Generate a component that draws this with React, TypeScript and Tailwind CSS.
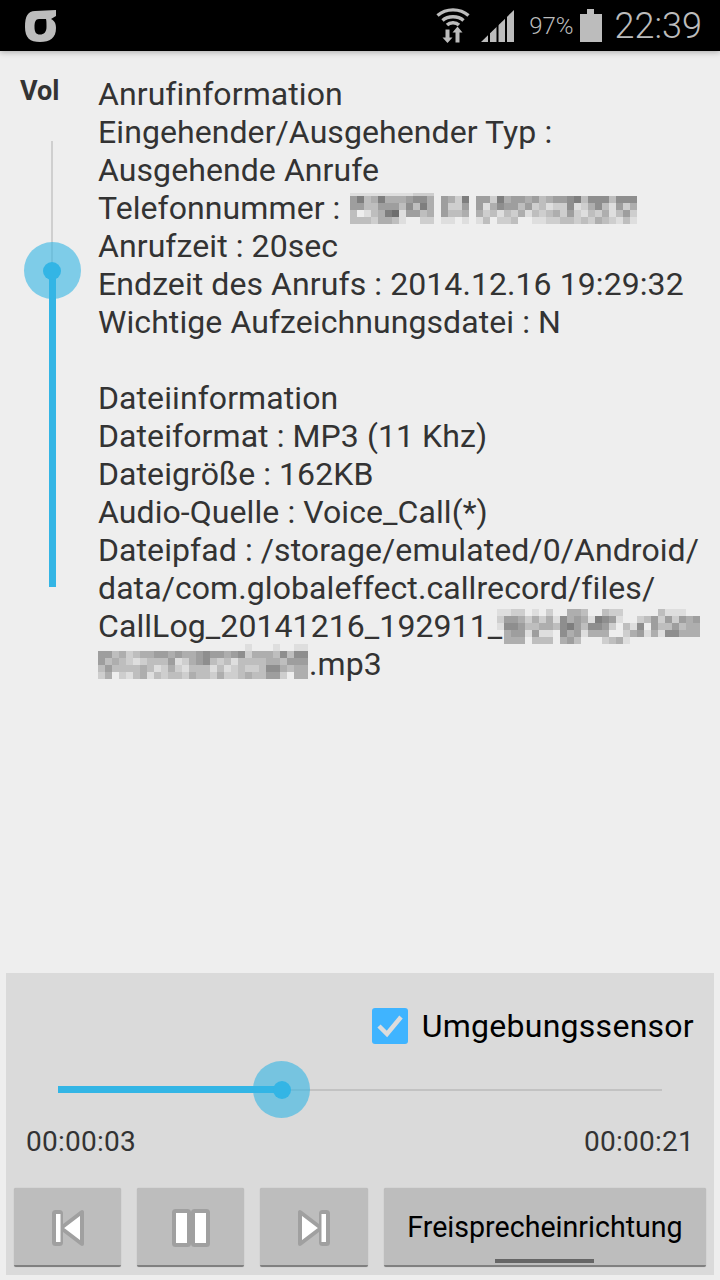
const levels = (rows: string[]) => rows.map((r) => r.split("").map((c) => (c === " " ? 0 : Number(c))));

// pixelated (censored) bits of the text
const phoneBlur = [
  "111111111222",
  "573474445664 5427 55274554534556736663666",
  "553355536374 5225 51465535231226124631524",
  "301347815534 5334 42313241323425213241352",
  "333244310022 1101 13022300112233232432131",
];
const fileBlurA = [
  "11220102 0443 0322 0 0 3111 0 3113 1".replace(/ /g, "0").slice(0, 29),
  "25542424164541765100235252545",
  "16653344367536652031605335344",
  "04551511064514440024514166444",
  "04440333045300023410000000000",
];
const fileBlurB = [
  "000000000000000000000100010011",
  "553423445545445655456244436366",
  "534321233351245632313333443555",
  "353333431242133313123223664344",
  "240213413233243324223433552044",
];

const Blur = ({ rows, top = 0, className }: { rows: string[]; top?: number; className?: string }) => {
  const cell = 7;
  const data = levels(rows);
  const w = Math.max(...rows.map((r) => r.length)) * cell;
  return (
    <svg width={w} height={rows.length * cell - top} className={className} shapeRendering="crispEdges">
      {data.map((row, y) =>
        row.map((v, x) =>
          v ? <rect key={x + "-" + y} x={x * cell} y={y * cell - top} width={cell} height={cell} fill={`rgb(${238 - v * 16},${238 - v * 16},${238 - v * 16})`} /> : null
        )
      )}
    </svg>
  );
};

const StatusBar = () => (
  <div className="relative z-10 flex h-[51px] items-center bg-black text-[#bcbcbc] shadow-[0_1px_6px_rgba(0,0,0,0.3)]">
    <svg width="31" height="32" viewBox="25 9 31 32" className="ml-[25px]">
      <path
        fillRule="evenodd"
        d="M35 10L56 9V15L51 18C55 20 56 23 56 27C56 37 50 41 40 41C30 41 25 37 25 26C25 15 28 10 35 10ZM46 18H39C35.5 18 34.5 21 34.5 26C34.5 31 36 33.5 40 33.5C44 33.5 46.5 31 46.5 26C46.5 22 46.5 20 46 18Z"
        fill="#bcbcbc"
      />
    </svg>
    <div className="ml-auto flex items-center">
      <svg width="34" height="36" viewBox="0 0 34 36" className="mt-[-1px]">
        <g fill="none" stroke="#bcbcbc" strokeWidth="3.4">
          <path d="M1.5 8.5C10 1 24 1 32.5 8.5" />
          <path d="M6.5 13.5C12 8.5 22 8.5 27.5 13.5" />
          <path d="M11 18C14 15 20 15 23 18" />
        </g>
        <path d="M9.5 22.5h4v8h3L11.5 36l-5-5.5h3zM19.5 29.5v-4h-3l5-6 5 6h-3v10h-4z" fill="#bcbcbc" />
      </svg>
      <svg width="34" height="34" viewBox="0 0 34 34" className="ml-[11px] mt-[2px]">
        <path d="M0 32L33 0V32Z" fill="#bcbcbc" />
        <g fill="#000">
          <rect x="7" y="0" width="2" height="32" />
          <rect x="15.5" y="0" width="2" height="32" />
          <rect x="24" y="0" width="2" height="32" />
        </g>
      </svg>
      <span className="ml-[14px] text-[24px] font-light leading-none">97%</span>
      <svg width="24" height="33" viewBox="0 0 24 33" className="ml-[5px]">
        <path d="M8 0h7v5h8v28H1V5h7z" fill="#bcbcbc" />
      </svg>
      <span className="ml-[12px] mr-[18px] text-[36px] font-light leading-none">22:39</span>
    </div>
  </div>
);

const Thumb = ({ className }: { className: string }) => (
  <div className={`absolute flex h-[57px] w-[57px] items-center justify-center rounded-full bg-[#33b5e5]/60 ${className}`}>
    <div className="h-[18px] w-[18px] rounded-full bg-[#33b5e5]" />
  </div>
);

const VolumeSlider = () => (
  <div className="flex w-[99px] shrink-0 flex-col pt-[25px]">
    <div className="ml-[20px] text-[27px] font-bold leading-[30px] text-[#333]">Vol</div>
    <div className="relative ml-[23px] mt-[35px] flex w-[58px] flex-col items-center">
      <div className="h-[130px] w-[2px] bg-[#cfcfcf]" />
      <div className="h-[316px] w-[7px] bg-[#33b5e5]" />
      <Thumb className="left-[0.5px] top-[101px]" />
    </div>
  </div>
);

const Line = ({ children }: { children?: React.ReactNode }) => (
  <div className="flex h-[38px] items-start whitespace-pre">{children}</div>
);

const InfoText = () => (
  <div className="ml-[-1px] flex-1 pt-[24px] text-[32px] leading-[38px] tracking-[0.08px] text-[#333]">
    <Line>Anrufinformation</Line>
    <Line>Eingehender/Ausgehender Typ :</Line>
    <Line>Ausgehende Anrufe</Line>
    <Line>
      Telefonnummer : <Blur rows={phoneBlur} top={4} className="ml-[2px] mt-[4px] shrink-0" />
    </Line>
    <Line>Anrufzeit : 20sec</Line>
    <Line>Endzeit des Anrufs : 2014.12.16 19:29:32</Line>
    <Line>Wichtige Aufzeichnungsdatei : N</Line>
    <Line />
    <Line>Dateiinformation</Line>
    <Line>Dateiformat : MP3 (11 Khz)</Line>
    <Line>Dateigröße : 162KB</Line>
    <Line>Audio-Quelle : Voice_Call(*)</Line>
    <Line>Dateipfad : /storage/emulated/0/Android/</Line>
    <Line>data/com.globaleffect.callrecord/files/</Line>
    <Line>
      CallLog_20141216_192911_
      <Blur rows={fileBlurA} className="ml-[-5px] mt-[2px] shrink-0" />
    </Line>
    <Line>
      <Blur rows={fileBlurB} className="mt-[-1px] shrink-0" />
      <span className="ml-[1px]">.mp3</span>
    </Line>
  </div>
);

const PrevIcon = () => (
  <svg width="34" height="38" viewBox="0 0 34 38">
    <g fill="#fff" stroke="#a0a0a0" strokeWidth="4" strokeLinejoin="round">
      <rect x="3" y="3" width="7" height="32" rx="1.5" />
      <path d="M31 3V35L10 19Z" />
    </g>
    <rect x="5.5" y="5" width="4" height="28" fill="#fff" />
  </svg>
);

const PauseIcon = () => (
  <svg width="38" height="38" viewBox="0 0 38 38">
    <g fill="#fff" stroke="#a0a0a0" strokeWidth="4" strokeLinejoin="round">
      <rect x="2" y="2" width="15" height="34" rx="1.5" />
      <rect x="21" y="2" width="15" height="34" rx="1.5" />
    </g>
  </svg>
);

const NextIcon = () => (
  <svg width="34" height="38" viewBox="0 0 34 38">
    <g fill="#fff" stroke="#a0a0a0" strokeWidth="4" strokeLinejoin="round">
      <rect x="24" y="3" width="7" height="32" rx="1.5" />
      <path d="M3 3V35L24 19Z" />
    </g>
    <rect x="24.5" y="5" width="4" height="28" fill="#fff" />
  </svg>
);

const btn = "flex h-[79px] items-center justify-center rounded-[2px] border-b-2 border-[#808080] bg-[#bdbdbd] pt-[2px] shadow-[0_0_1px_rgba(0,0,0,0.25)]";

const PlayerPanel = () => (
  <div className="mx-[6px] mb-[5px] flex h-[302px] shrink-0 flex-col bg-[#dadada]">
    <div className="mr-[20px] mt-[34px] flex items-center justify-end">
      <div className="flex h-[36px] w-[36px] items-center justify-center rounded-[3px] bg-[#3fb4ff]">
        <svg width="28" height="24" viewBox="0 0 28 24">
          <path d="M3 12l8 8L25 3" fill="none" stroke="#dcdcdc" strokeWidth="4.5" />
        </svg>
      </div>
      <span className="ml-[14px] text-[32px] leading-[38px] tracking-[0.27px] text-black">Umgebungssensor</span>
    </div>
    <div className="relative mx-[52px] mt-[16px] flex h-[57px] items-center">
      <div className="h-[7px] w-[224px] bg-[#33b5e5]" />
      <div className="h-[2px] flex-1 bg-[#c2c2c2]" />
      <Thumb className="left-[195px] top-0" />
    </div>
    <div className="mx-[20px] mt-[8px] flex justify-between text-[28px] leading-[32px] tracking-[0.25px] text-[#333]">
      <span>00:00:03</span>
      <span>00:00:21</span>
    </div>
    <div className="mx-[8px] mt-[30px] flex gap-[16px]">
      <div className={`${btn} w-[107px]`}><PrevIcon /></div>
      <div className={`${btn} w-[107px]`}><PauseIcon /></div>
      <div className={`${btn} w-[108px]`}><NextIcon /></div>
      <div className={`${btn} relative flex-1 text-[28.6px] text-black`}>
        Freisprecheinrichtung
        <div className="absolute bottom-[2px] left-[111px] h-[4px] w-[99px] bg-[#666]" />
      </div>
    </div>
  </div>
);

export default function App() {
  return (
    <div className="flex h-[1280px] w-[720px] flex-col overflow-hidden bg-[#eeeeee] font-['Roboto',sans-serif]">
      <StatusBar />
      <div className="flex min-h-0 flex-1">
        <VolumeSlider />
        <InfoText />
      </div>
      <PlayerPanel />
    </div>
  );
}
